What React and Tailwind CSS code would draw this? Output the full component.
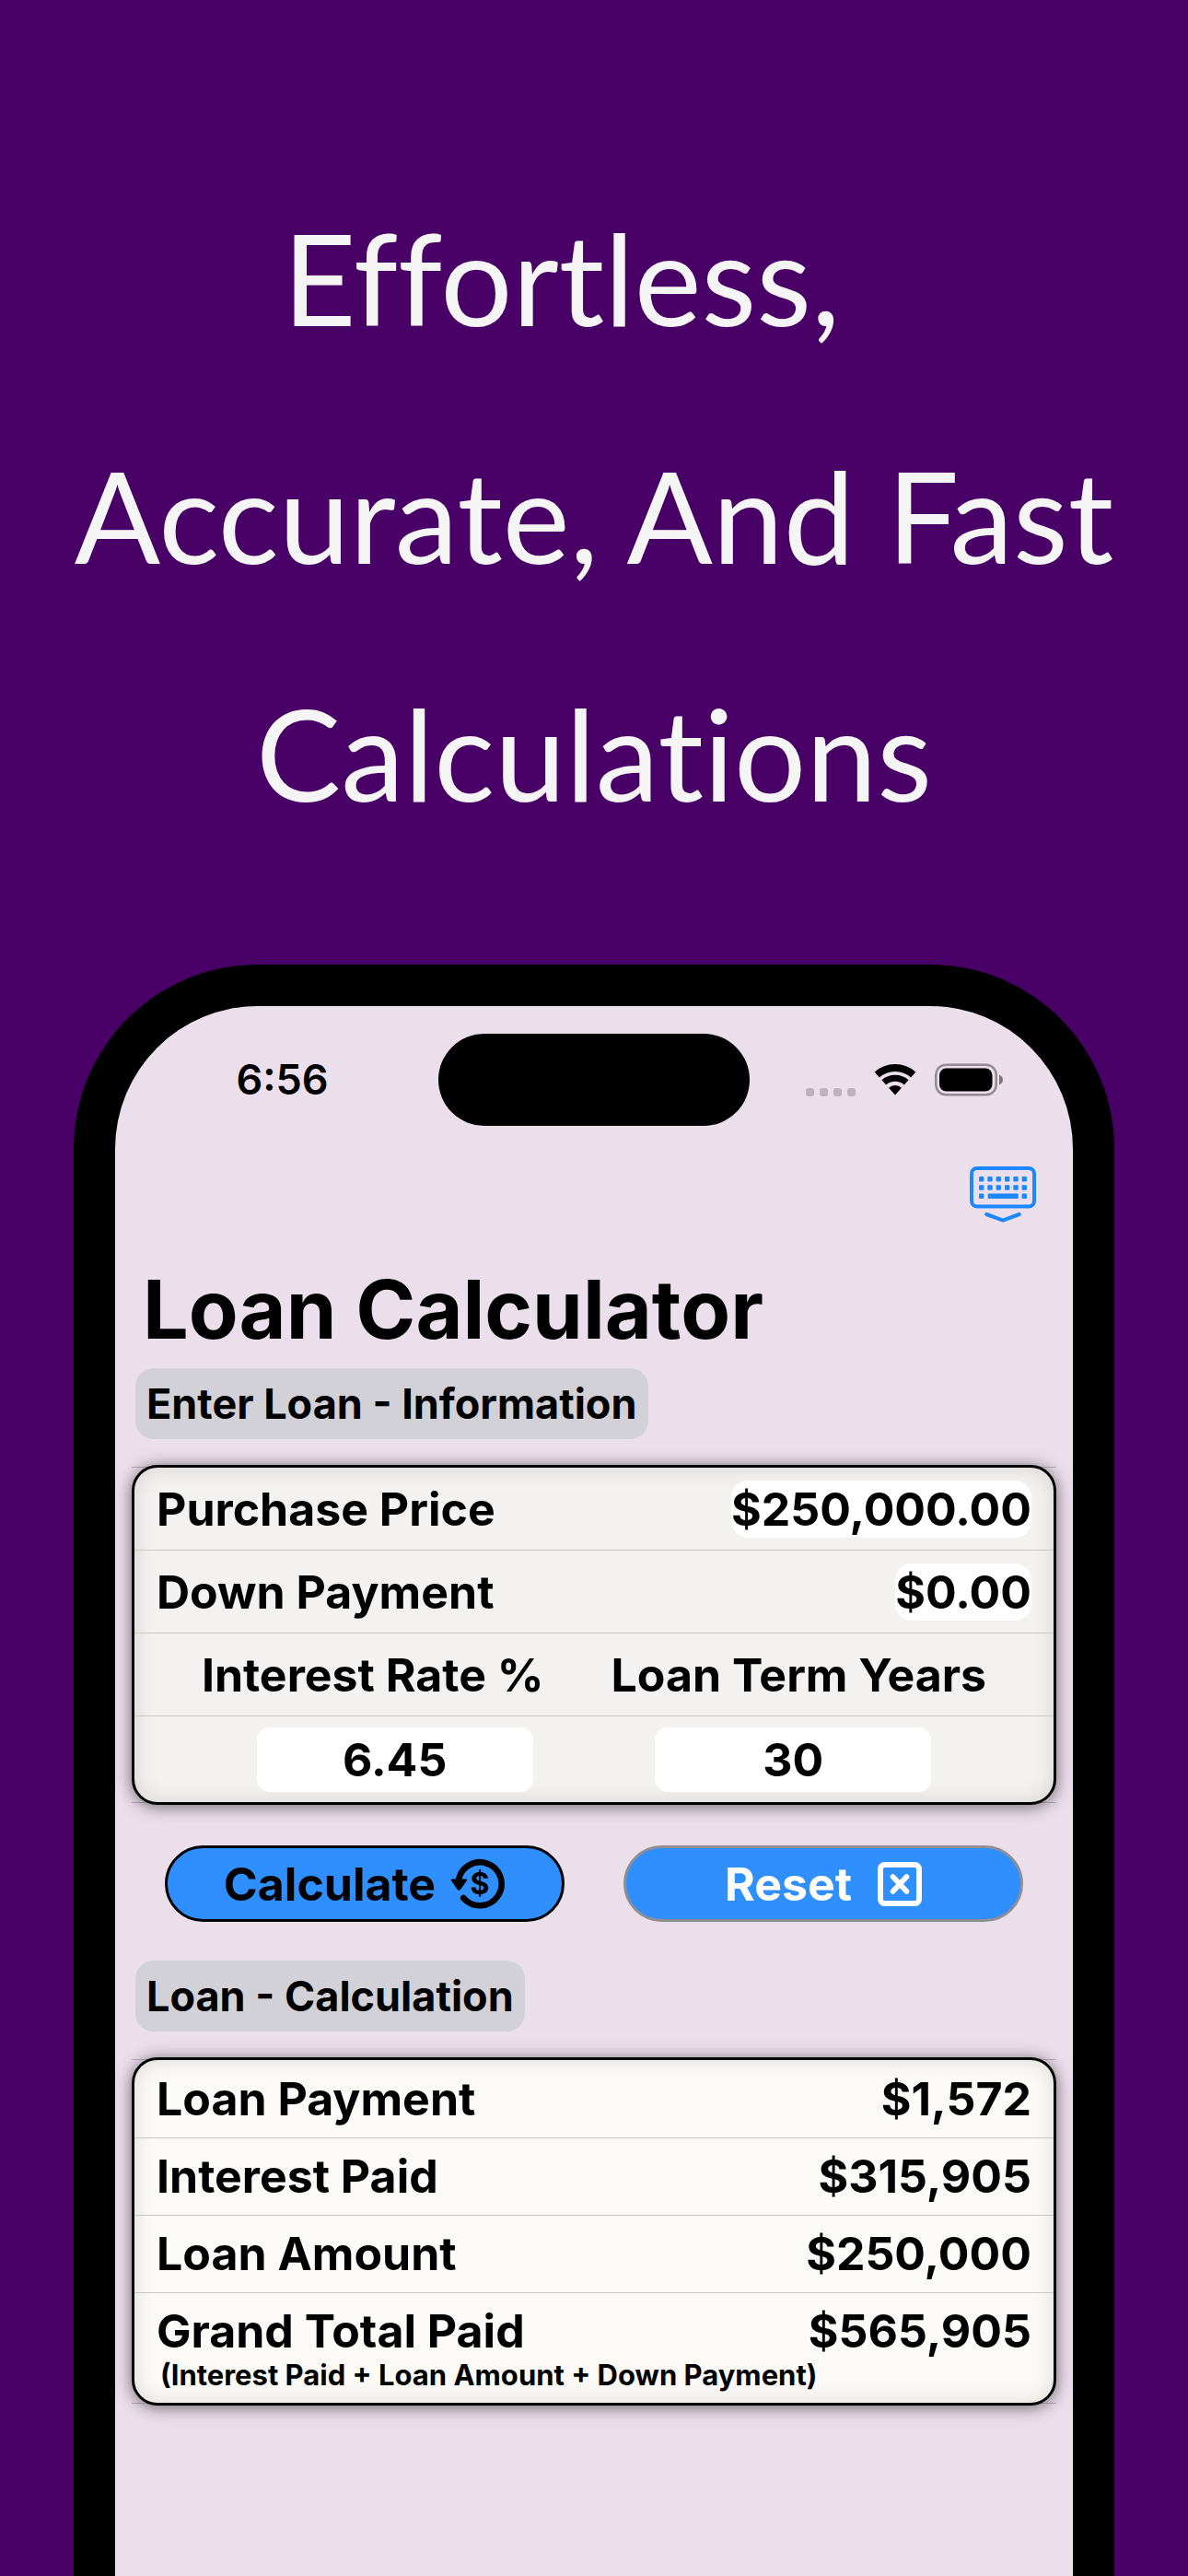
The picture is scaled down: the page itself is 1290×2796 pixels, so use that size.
import { useState } from 'react';

const RESULTS = [
  { label: 'Loan Payment', value: '$1,572' },
  { label: 'Interest Paid', value: '$315,905' },
  { label: 'Loan Amount', value: '$250,000' },
  { label: 'Grand Total Paid', value: '$565,905', note: '(Interest Paid + Loan Amount + Down Payment)' },
];

const DEFAULTS = { price: '$250,000.00', down: '$0.00', rate: '6.45', years: '30' };

function WifiIcon() {
  return (
    <svg className="w-[46px] h-[34px]" viewBox="0 0 46 34" fill="none" aria-hidden="true">
      <path d="M3.3 11.6A29.5 29.5 0 0 1 42.7 11.6" stroke="#000" strokeWidth="8" />
      <path d="M10.8 19.9A18.3 18.3 0 0 1 35.2 19.9" stroke="#000" strokeWidth="7" />
      <path d="M23 33.5L16 25.7A10.5 10.5 0 0 1 30 25.7Z" fill="#000" />
    </svg>
  );
}

function BatteryIcon() {
  return (
    <svg className="w-[74px] h-[36px]" viewBox="0 0 74 36" fill="none" aria-hidden="true">
      <rect x="1.25" y="1.75" width="65.5" height="32.5" rx="11" stroke="#938a92" strokeWidth="2.5" />
      <rect x="5" y="5.5" width="57.5" height="25" rx="7.5" fill="#000" />
      <path d="M70 12.5C72.5 13.5 74 15.5 74 18S72.5 22.5 70 23.5Z" fill="#7d757c" />
    </svg>
  );
}

function KeyboardDownIcon() {
  const cols = [12.7, 22, 31.3, 40.7, 50, 59.3];
  return (
    <svg className="w-[72px] h-[62px]" viewBox="0 0 72 62" fill="none" aria-hidden="true">
      <rect x="2" y="2" width="68" height="41.5" rx="6" stroke="#1c87ff" strokeWidth="4" />
      {cols.map(x => (
        <g key={x} fill="#1c87ff">
          <rect x={x - 2.7} y="11" width="5.4" height="5.4" rx="1" />
          <rect x={x - 2.7} y="20.3" width="5.4" height="5.4" rx="1" />
        </g>
      ))}
      <rect x="10" y="29.6" width="5.4" height="5.4" rx="1" fill="#1c87ff" />
      <rect x="19.7" y="29.6" width="33" height="5.4" rx="1" fill="#1c87ff" />
      <rect x="56.6" y="29.6" width="5.4" height="5.4" rx="1" fill="#1c87ff" />
      <path d="M18.2 52L36 58.6L53.8 52" stroke="#1c87ff" strokeWidth="4" strokeLinecap="round" strokeLinejoin="round" />
    </svg>
  );
}

function MoneyBackIcon() {
  return (
    <svg className="w-[60px] h-[56px]" viewBox="0 0 60 56" fill="none" aria-hidden="true">
      <path d="M8.8 25A23.5 23.5 0 1 1 14.2 43" stroke="#000" strokeWidth="6.6" strokeLinecap="round" />
      <path d="M2.2 22.5H16.6Q19 22.5 17.6 24.6L11.2 33.8Q9.4 36 7.6 33.8L1.2 24.6Q0 22.5 2.2 22.5Z" fill="#000" />
      <text x="32" y="39" textAnchor="middle" fill="#000" className="font-[Inter] font-bold text-[32px]">$</text>
    </svg>
  );
}

function BoxXIcon() {
  return (
    <svg className="w-[48px] h-[48px]" viewBox="0 0 48 48" fill="none" stroke="#fff" aria-hidden="true">
      <rect x="3" y="3" width="42" height="42" rx="4.5" strokeWidth="6" />
      <path d="M16.5 16L31.5 32M31.5 16L16.5 32" strokeWidth="5.6" strokeLinecap="round" />
    </svg>
  );
}

function StatusBar() {
  return (
    <div className="grid grid-cols-[1fr_338px_1fr] items-center pt-[30px]">
      <span className="pl-3 text-center text-[45px] leading-[54px] font-semibold">6:56</span>
      <div className="h-[100px] rounded-full bg-black" />
      <div className="flex items-center justify-center gap-5 pr-4">
        <div className="flex gap-[6px] self-end">
          {[0, 1, 2, 3].map(i => (
            <span key={i} className="size-[9px] rounded-[3px] bg-[#bfb2bc]" />
          ))}
        </div>
        <WifiIcon />
        <BatteryIcon />
      </div>
    </div>
  );
}

function SectionTag({ children }) {
  return (
    <h2 className="ml-1 w-fit rounded-[20px] bg-[#d2d1d7] px-3 py-2 text-[45px] leading-[61px] font-bold">
      {children}
    </h2>
  );
}

// The hairlines above and below run past the card's rounded corners
function Card({ className, children }) {
  return (
    <div className="border-y border-[#b9b0b7]">
      <div
        className={
          'my-[-3px] overflow-hidden rounded-[28px] border-3 border-black shadow-[0_2px_18px_rgba(0,0,0,0.55)] ' +
          className
        }
      >
        <div className="rounded-[25px] divide-y divide-[#c8c8ca] shadow-[inset_0_0_24px_rgba(0,0,0,0.12)]">
          {children}
        </div>
      </div>
    </div>
  );
}

export default function App() {
  const [form, setForm] = useState(DEFAULTS);

  const set = key => e => setForm(prev => ({ ...prev, [key]: e.target.value }));

  return (
    <div className="flex min-h-screen flex-col bg-[#480066] font-[Inter,sans-serif] text-black">
      <h1 className="pt-[172px] pb-[101px] text-center font-[Lato,sans-serif] text-[138px] leading-[258px] font-normal whitespace-pre-line text-[#f5f5f5] [font-variant-ligatures:none]">
        {'Effortless,\u00a0\u00a0\nAccurate, And Fast\nCalculations'}
      </h1>

      <main className="mx-20 flex-1 rounded-t-[200px] border-x-[45px] border-t-[45px] border-black bg-[#ebdfeb]">
        <StatusBar />

        <div className="flex justify-end pt-11 pr-10">
          <button type="button" aria-label="Hide keyboard">
            <KeyboardDownIcon />
          </button>
        </div>

        <form className="px-[18px]" onSubmit={e => e.preventDefault()}>
          <h2 className="pt-[37px] pb-2 pl-3 text-[88px] leading-[112px] font-bold">Loan Calculator</h2>

          <SectionTag>Enter Loan - Information</SectionTag>

          <div className="pt-[30px] text-[50px] leading-[60px] font-bold">
            <Card className="bg-[#f3f2f0]">
              <div className="flex h-[90px] items-center justify-between px-6">
                <label htmlFor="price">Purchase Price</label>
                <input
                  id="price"
                  className="field-sizing-content h-[62px] rounded-[18px] bg-white text-right"
                  value={form.price}
                  onChange={set('price')}
                />
              </div>
              <div className="flex h-[90px] items-center justify-between px-6">
                <label htmlFor="down">Down Payment</label>
                <input
                  id="down"
                  className="field-sizing-content h-[62px] rounded-[18px] bg-white text-right"
                  value={form.down}
                  onChange={set('down')}
                />
              </div>
              <div className="flex h-[90px] items-center justify-evenly">
                <label htmlFor="rate">Interest Rate %</label>
                <label htmlFor="years">Loan Term Years</label>
              </div>
              <div className="flex h-[93px] items-center justify-evenly">
                <input
                  id="rate"
                  className="h-[70px] w-[300px] rounded-[14px] bg-white text-center"
                  value={form.rate}
                  onChange={set('rate')}
                />
                <input
                  id="years"
                  className="h-[70px] w-[300px] rounded-[14px] bg-white text-center"
                  value={form.years}
                  onChange={set('years')}
                />
              </div>
            </Card>
          </div>

          <div className="flex gap-16 px-9 pt-[46px] pb-[42px] text-[50px] leading-[60px] font-bold">
            <button
              type="submit"
              className="flex h-[83px] flex-1 items-center justify-center gap-4 rounded-full border-3 border-black bg-[#2f8fff]"
            >
              Calculate
              <MoneyBackIcon />
            </button>
            <button
              type="button"
              onClick={() => setForm(DEFAULTS)}
              className="flex h-[83px] flex-1 items-center justify-center gap-7 rounded-full border-3 border-[#8e8e93] bg-[#2f8fff] text-white"
            >
              Reset
              <BoxXIcon />
            </button>
          </div>

          <SectionTag>Loan - Calculation</SectionTag>

          <dl className="pt-[30px] pb-[120px] text-[50px] leading-[60px] font-bold">
            <Card className="bg-[#fbfaf6]">
              {RESULTS.map(r => (
                <div key={r.label} className="px-6 pt-[11px] pb-3 first:pt-3">
                  <div className="flex justify-between">
                    <dt>{r.label}</dt>
                    <dd>{r.value}</dd>
                  </div>
                  {r.note && <dd className="pl-1 text-[31px] leading-9">{r.note}</dd>}
                </div>
              ))}
            </Card>
          </dl>
        </form>
      </main>
    </div>
  );
}
